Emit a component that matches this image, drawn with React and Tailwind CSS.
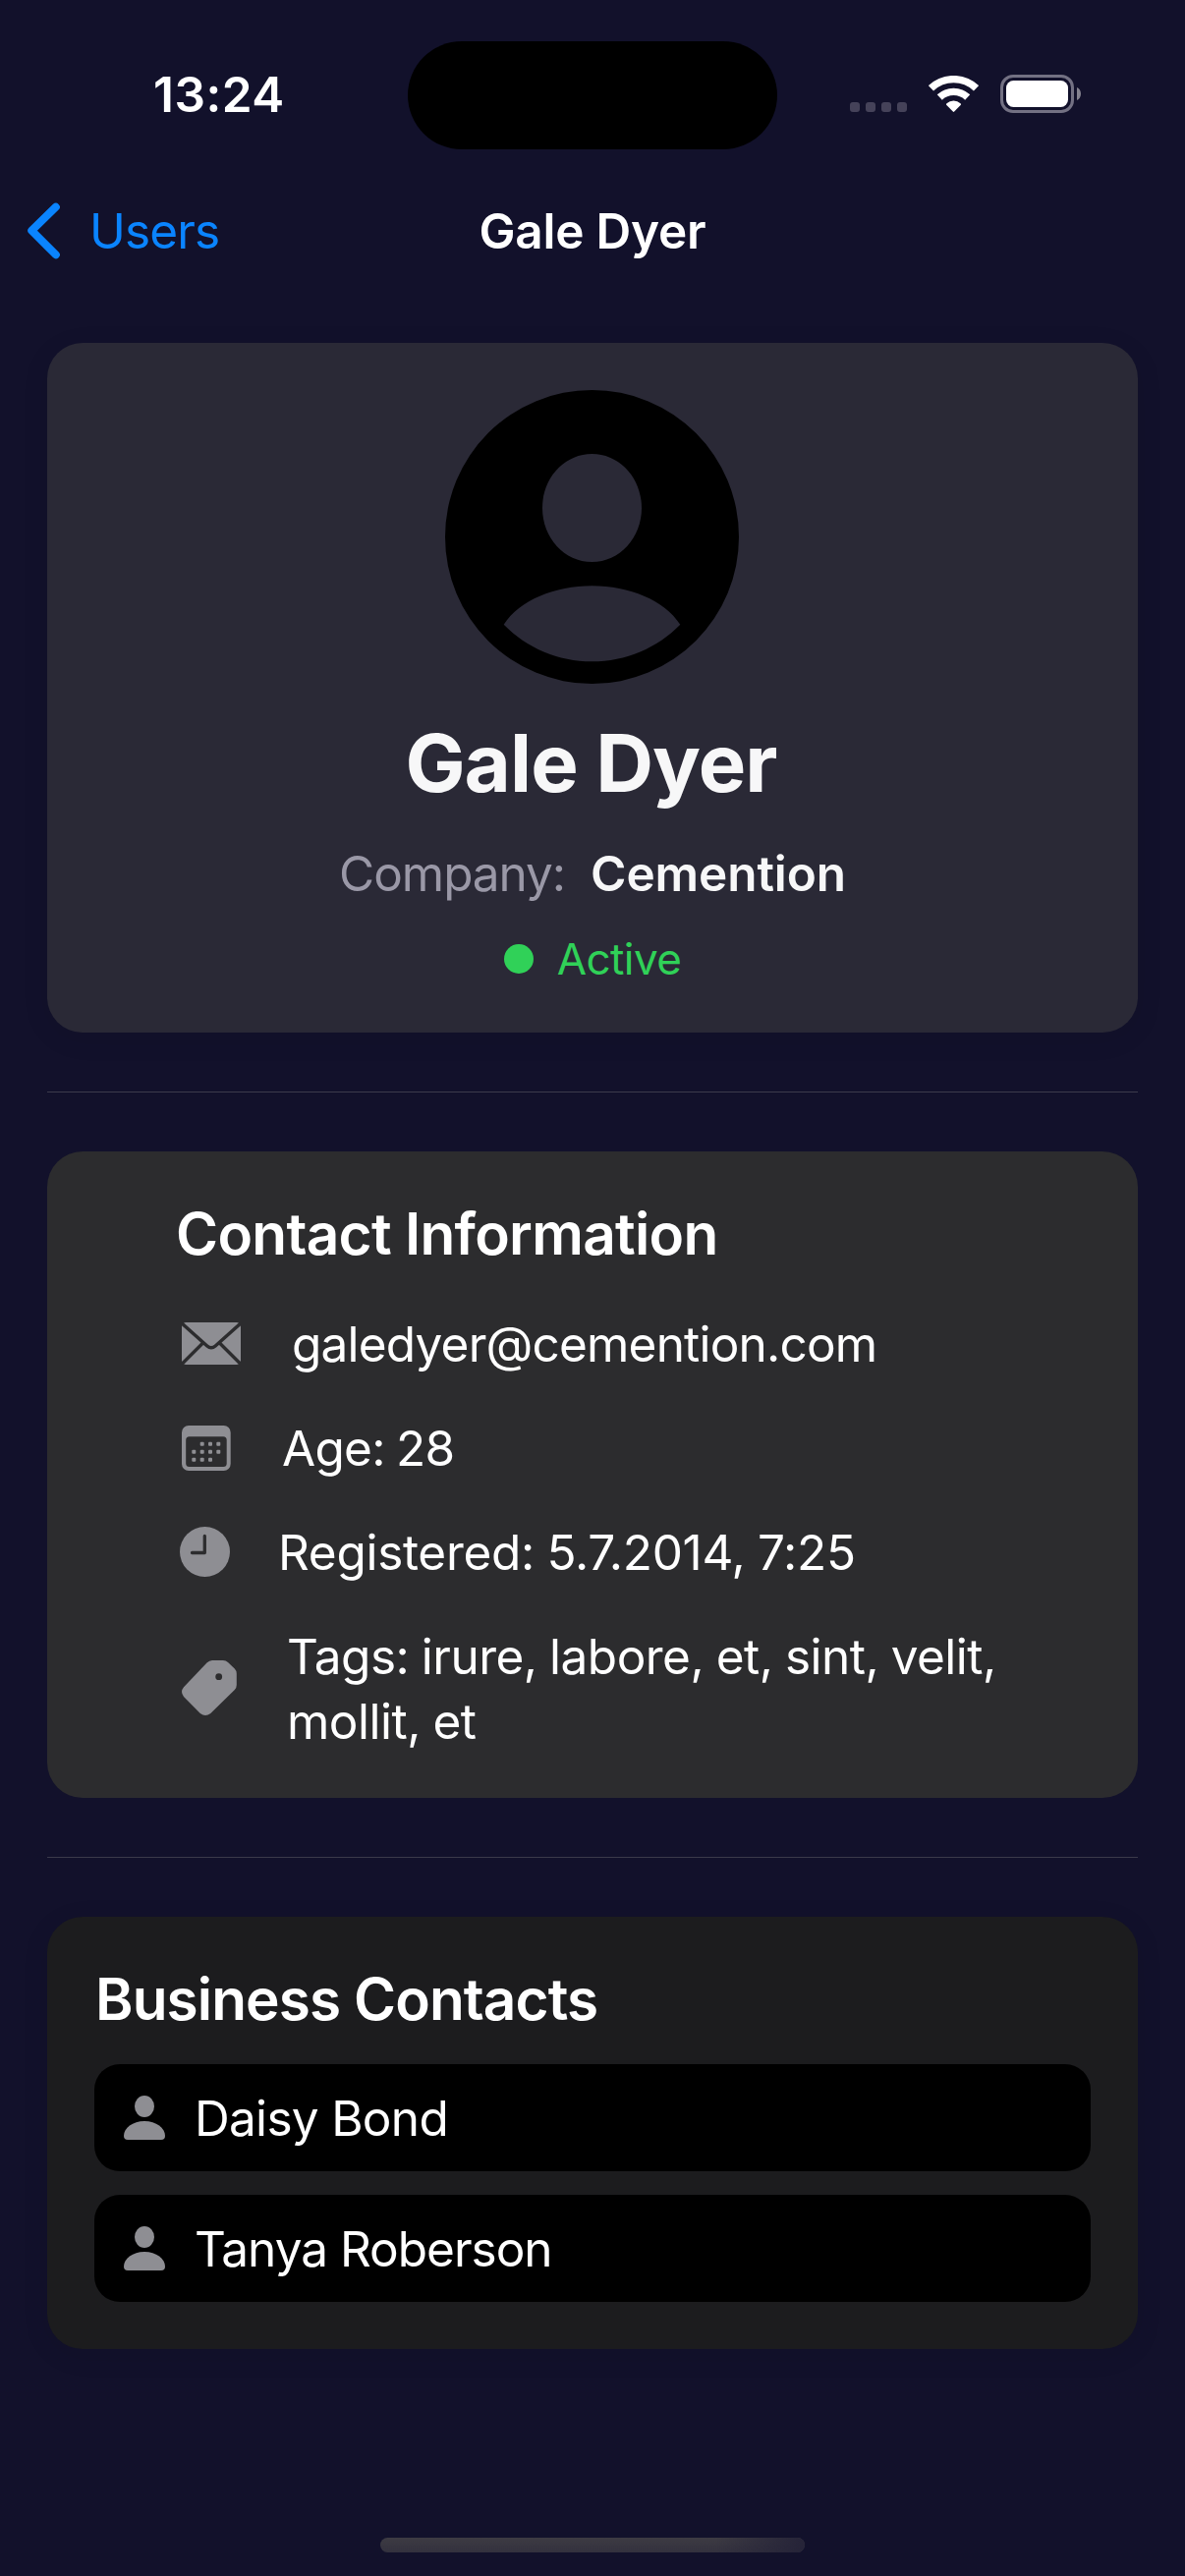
import React from "react";

function WifiIcon() {
  return (
    <svg className="ml-[22px] h-[37px] w-[51px]" viewBox="0 0 51 37" fill="none">
      <path d="M2.5 12.8A33.4 33.4 0 0 1 48.5 12.8" stroke="#fff" strokeWidth="7.4" />
      <path d="M11.3 22A20.7 20.7 0 0 1 39.7 22" stroke="#fff" strokeWidth="7.4" />
      <path d="M24.8 36.6L18.4 30Q17.6 29.1 18.5 28.2A10.6 10.6 0 0 1 32.5 28.2Q33.4 29.1 32.6 30L26.2 36.6Q25.5 37.2 24.8 36.6Z" fill="#fff" />
    </svg>
  );
}

function BatteryIcon() {
  return (
    <svg className="ml-[22px] h-[39px] w-[82px]" viewBox="0 0 82 39" fill="none">
      <rect x="1.5" y="1.5" width="72" height="36" rx="11.5" stroke="#737183" strokeWidth="3" />
      <rect x="6" y="6" width="63" height="27" rx="7.5" fill="#fff" />
      <path d="M78 13C80.6 14.2 82 16.6 82 19.5S80.6 24.8 78 26Z" fill="#84828f" />
    </svg>
  );
}

function AvatarIcon() {
  return (
    <svg className="h-[300px] w-[300px] shrink-0" viewBox="0 0 300 300">
      <path
        fillRule="evenodd"
        fill="#000"
        d="M149.5 0A149.5 149.5 0 1 1 149.5 299A149.5 149.5 0 1 1 149.5 0ZM149.5 65C121.5 65 99 89.5 99 120C99 150.5 121.5 175 149.5 175C177.5 175 200 150.5 200 120C200 89.5 177.5 65 149.5 65ZM59.7 238.7C83 262.5 115 276.3 149.5 276.3S216 262.5 239.3 238.7C223 214 187.5 199.3 149.5 199.3S76 214 59.7 238.7Z"
      />
    </svg>
  );
}

function MailIcon() {
  return (
    <svg className="h-[43px] w-[60px]" viewBox="0 0 60 43">
      <rect width="60" height="43" rx="4.5" fill="#8e8e93" />
      <g fill="none" stroke="#2c2c2e" strokeWidth="3.4">
        <path d="M-1 0L25.8 24Q30 27.7 34.2 24L61 0" />
        <path d="M-1 43.5L22 20.5M61 43.5L38 20.5" />
      </g>
    </svg>
  );
}

const calendarDots = [
  [20.7, 18.7], [29, 18.7], [37.3, 18.7],
  [12.3, 26.7], [20.7, 26.7], [29, 26.7], [37.3, 26.7],
  [12.3, 34.7], [20.7, 34.7], [29, 34.7],
];

function CalendarIcon() {
  return (
    <svg className="h-[46px] w-[50px]" viewBox="0 0 50 46">
      <rect width="49.7" height="46" rx="7" fill="#8e8e93" />
      <rect x="4.2" y="11.3" width="41.5" height="30.7" rx="3.5" fill="#2c2c2e" />
      {calendarDots.map(([x, y]) => (
        <rect key={`${x}-${y}`} x={x - 2} y={y - 2} width="4" height="4" rx="1" fill="#8e8e93" />
      ))}
    </svg>
  );
}

function ClockIcon() {
  return (
    <svg className="h-[51px] w-[51px]" viewBox="0 0 51 51">
      <circle cx="25.5" cy="25.5" r="25.5" fill="#8e8e93" />
      <path d="M25.3 9.5V26.5H12.5" fill="none" stroke="#2c2c2e" strokeWidth="3.3" strokeLinecap="round" strokeLinejoin="round" />
    </svg>
  );
}

function TagIcon() {
  return (
    <svg className="h-[56px] w-[56px]" viewBox="0 0 56 56">
      <path
        fill="#8e8e93"
        d="M31 0H42Q45 0 47 2L53.8 8.5Q55.8 10.5 55.8 13.5V25Q55.8 28 53.8 30L29.3 54Q24 58 18.8 54L2 37Q-2 32 2 27.2L25.5 2.5Q28 0 31 0Z"
      />
      <circle cx="37.7" cy="16.7" r="3.4" fill="#2c2c2e" />
    </svg>
  );
}

function PersonIcon() {
  return (
    <svg className="h-[45px] w-[42px] shrink-0" viewBox="0 0 42 45" fill="#8e8e93">
      <ellipse cx="21" cy="11" rx="10" ry="11" />
      <path d="M4 45Q0 45 0 41C0 33 9 26 21 26S42 33 42 41Q42 45 38 45Z" />
    </svg>
  );
}

const Divider = () => <div className="mx-[48px] my-[60px] h-px shrink-0 bg-[#3b3a4b]" />;

function InfoRow({ icon, iconClass, textClass, children }) {
  return (
    <div className="flex items-center text-[49.5px] leading-[66px]">
      <div className={iconClass}>{icon}</div>
      <p className={textClass}>{children}</p>
    </div>
  );
}

function ContactRow({ name, textClass }) {
  return (
    <div className="flex h-[109px] items-center gap-[30px] rounded-[26px] bg-black px-[30px]">
      <PersonIcon />
      <span className={textClass}>{name}</span>
    </div>
  );
}

export default function App() {
  return (
    <div className="flex h-[2622px] w-[1206px] flex-col overflow-hidden bg-[#12112b] font-[Inter,sans-serif] text-white">
      <header className="shrink-0">
        <div className="flex items-center pt-[42px]">
          <div className="w-[415px] pb-[2px] pl-[156px] text-[49.5px] leading-[60px] font-semibold tracking-[0.5px]">13:24</div>
          <div className="h-[110px] w-[376px] rounded-full bg-black" />
          <div className="flex items-center pb-[3px] pl-[74px]">
            <div className="flex gap-[6px] pt-[27px]">
              <span className="h-[10px] w-[10px] rounded-[3px] bg-[#454259]" />
              <span className="h-[10px] w-[10px] rounded-[3px] bg-[#454259]" />
              <span className="h-[10px] w-[10px] rounded-[3px] bg-[#454259]" />
              <span className="h-[10px] w-[10px] rounded-[3px] bg-[#454259]" />
            </div>
            <WifiIcon />
            <BatteryIcon />
          </div>
        </div>
        <nav className="grid h-[166px] grid-cols-[1fr_auto_1fr] items-center px-[27px] text-[49.5px] leading-[60px]">
          <div className="flex items-center text-[#0a84ff]">
            <svg className="h-[58px] w-[34px]" viewBox="0 0 34 58" fill="none">
              <path d="M29.8 4.7L5.3 28.7L29.8 53.3" stroke="#0a84ff" strokeWidth="8" strokeLinecap="round" strokeLinejoin="round" />
            </svg>
            <span className="ml-[30px] tracking-[-0.86px]">Users</span>
          </div>
          <h1 className="font-semibold tracking-[-0.24px]">Gale Dyer</h1>
        </nav>
      </header>

      <section className="mx-[48px] mt-[31px] flex h-[702px] shrink-0 flex-col items-center rounded-[36px] bg-[#2a2936] pt-[48px] shadow-[0_6px_30px_rgba(0,0,0,0.07)]">
        <AvatarIcon />
        <h2 className="mt-[30px] pr-[3px] text-[81.5px] leading-[100px] font-bold tracking-[-0.93px] text-[#f7f7f8]">Gale Dyer</h2>
        <div className="mt-[31px] flex gap-[26px] text-[49.5px] leading-[62px]">
          <span className="tracking-[-1.05px] text-[#9a98a7]">Company:</span>
          <span className="font-semibold tracking-[-0.1px] text-[#f7f7f8]">Cemention</span>
        </div>
        <div className="mt-[29px] flex items-center gap-[24px] text-[44px] leading-[54px] text-[#30d158]">
          <span className="h-[30px] w-[30px] rounded-full bg-[#30d158]" />
          <span className="tracking-[-0.58px]">Active</span>
        </div>
      </section>

      <Divider />

      <section className="mx-[48px] h-[658px] shrink-0 rounded-[36px] bg-[#2c2c2e] pt-[48px] pl-[131px]">
        <h3 className="text-[58.5px] leading-[72px] font-semibold tracking-[-0.7px]">Contact Information</h3>
        <div className="mt-[43px] flex flex-col gap-[40px]">
          <InfoRow icon={<MailIcon />} iconClass="w-[118px] shrink-0 pb-[1px] pl-[6px]" textClass="tracking-[-0.8px]">galedyer@cemention.com</InfoRow>
          <InfoRow icon={<CalendarIcon />} iconClass="w-[108px] shrink-0 pl-[6px]" textClass="tracking-[-0.7px] [word-spacing:-2px]">Age: 28</InfoRow>
          <InfoRow icon={<ClockIcon />} iconClass="w-[104px] shrink-0 pb-[1px] pl-[4px]" textClass="tracking-[-0.3px] [word-spacing:-1px]">Registered: 5.7.2014, 7:25</InfoRow>
          <InfoRow icon={<TagIcon />} iconClass="w-[113px] shrink-0 pb-[2px] pl-[6px]" textClass="w-[760px] tracking-[-0.5px] [word-spacing:-1px]">Tags: irure, labore, et, sint, velit, mollit, et</InfoRow>
        </div>
      </section>

      <Divider />

      <section className="mx-[48px] flex shrink-0 flex-col rounded-[36px] bg-[#1c1c1e] p-[48px] shadow-[0_6px_30px_rgba(0,0,0,0.07)]">
        <h3 className="pl-[1px] text-[58.5px] leading-[72px] font-semibold tracking-[-0.91px]">Business Contacts</h3>
        <div className="mt-[30px] flex flex-col gap-[24px] text-[49.5px] leading-[60px]">
          <ContactRow name="Daisy Bond" textClass="tracking-[-0.7px]" />
          <ContactRow name="Tanya Roberson" textClass="tracking-[-1px]" />
        </div>
      </section>

      <div className="mx-auto mt-auto mb-[24px] flex h-[15px] w-[432px] shrink-0 overflow-hidden rounded-full bg-linear-to-b from-[#3d3b43] to-[#33313e]">
        <div className="ml-auto h-full w-[90px] bg-linear-to-r from-[#252338]/0 to-[#252338]" />
      </div>
    </div>
  );
}
